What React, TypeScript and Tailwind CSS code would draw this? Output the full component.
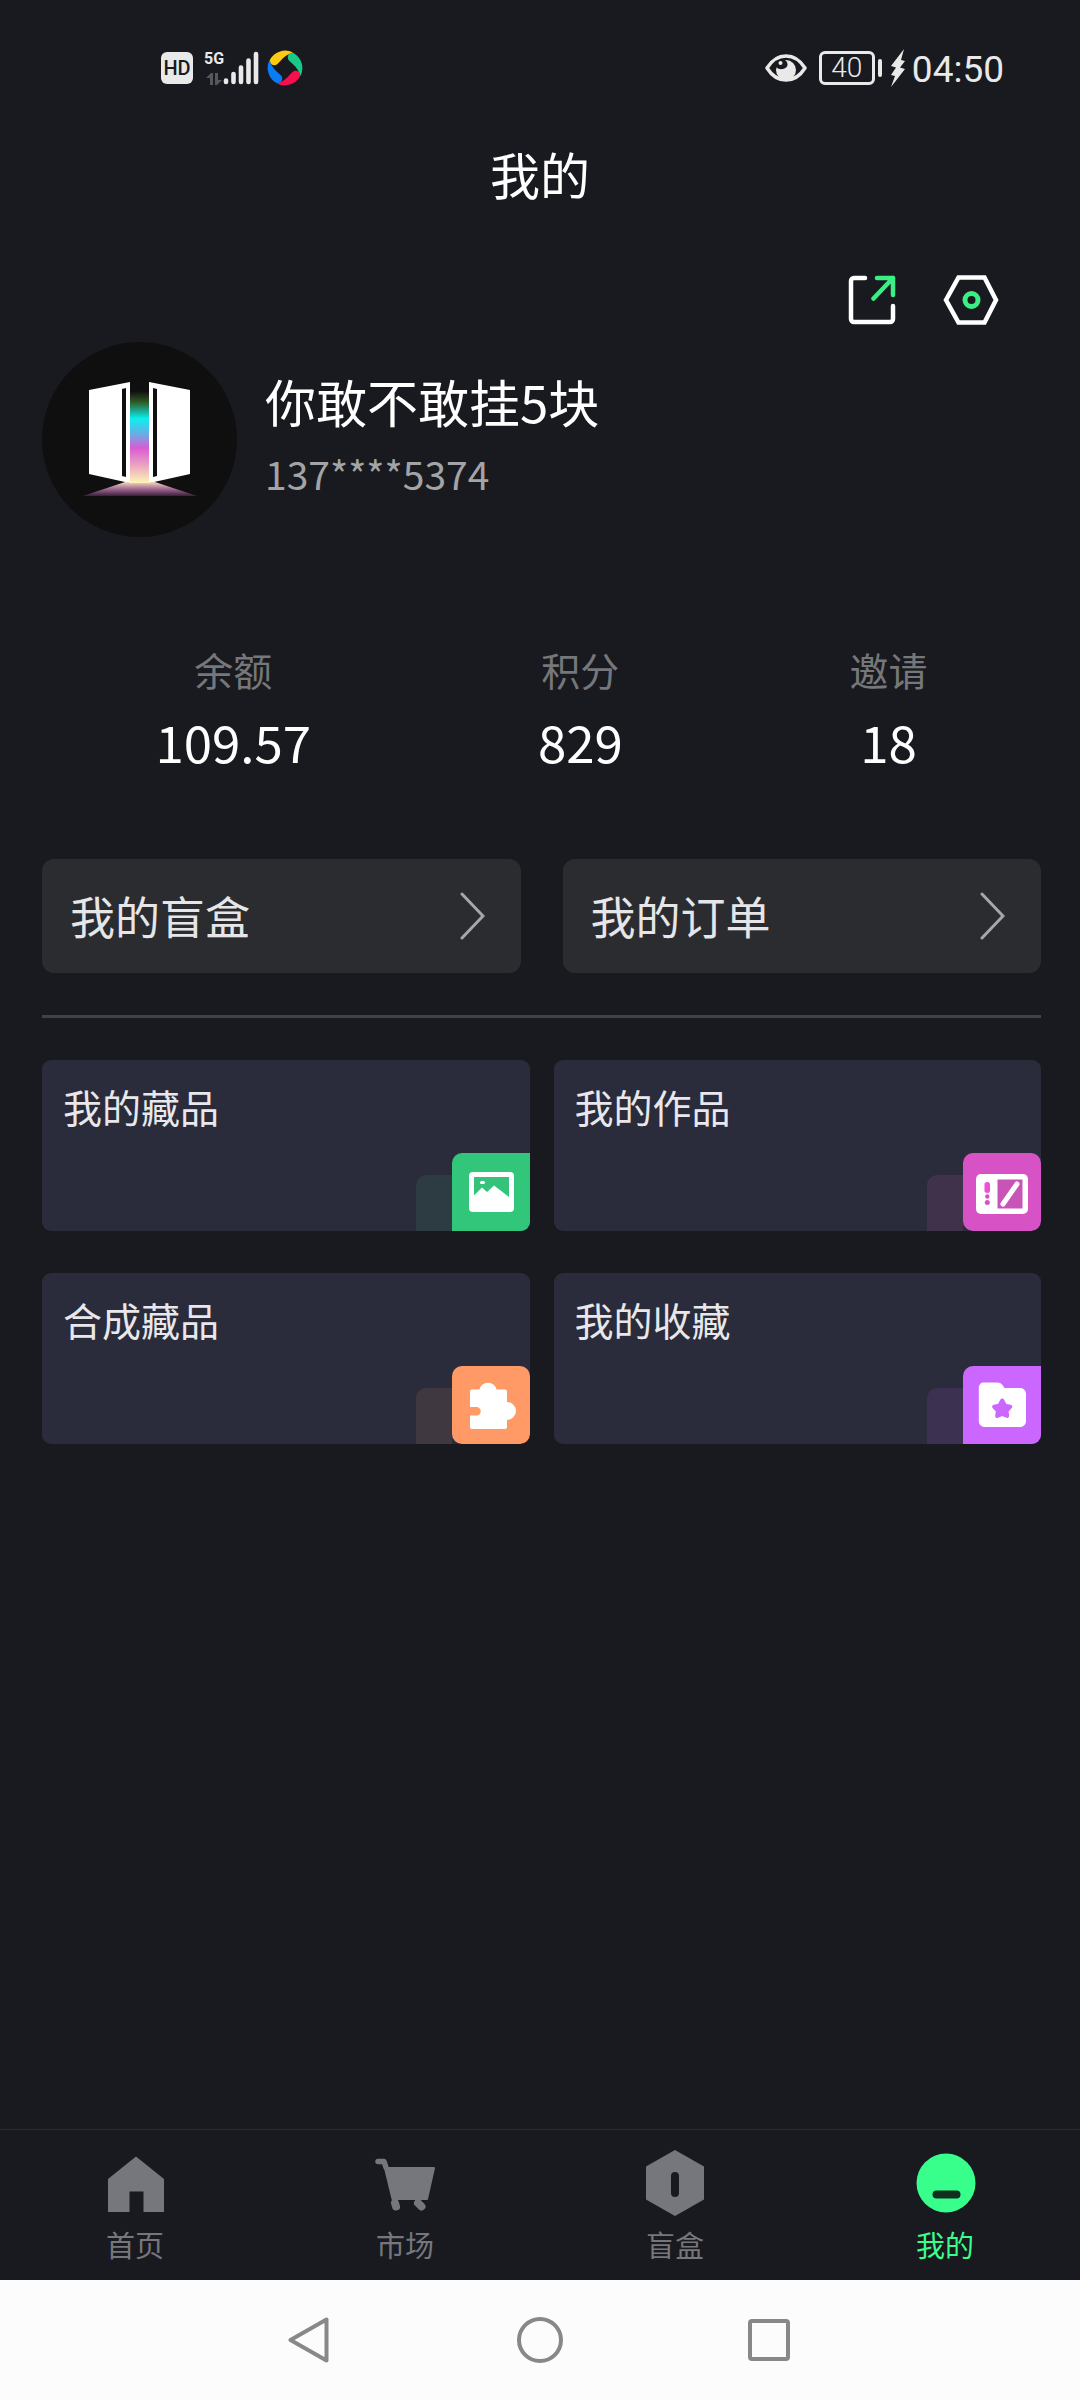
import React from 'react';

interface Feature {
  label: string;
  tile: string;
  ghost: string;
  icon: React.ReactNode;
}

const STATS = [
  { label: '余额', value: '109.57' },
  { label: '积分', value: '829' },
  { label: '邀请', value: '18' },
];

const SHORTCUTS = ['我的盲盒', '我的订单'];

const PictureIcon = () => (
  <svg viewBox="0 0 78 78" className="w-full h-full">
    <rect x="17" y="19" width="45" height="40" rx="4" fill="#fff" />
    <path d="M22 24h35v20L42 32.500l-7 6.500-5-4.500-8 8z" fill="#35c37b" />
    <rect x="28" y="28" width="5" height="3" rx="1.500" fill="#fff" />
  </svg>
);

const TabletIcon = () => (
  <svg viewBox="0 0 78 78" className="w-full h-full">
    <rect x="13" y="21" width="52" height="40" rx="5" fill="#fff" />
    <rect x="34.500" y="26.500" width="25" height="29" fill="#c954b8" />
    <path d="M40 51 54 31" stroke="#fff" strokeWidth="5" strokeLinecap="round" />
    <rect x="21.500" y="29" width="5.500" height="11" rx="2.700" fill="#f04fd8" />
    <circle cx="24.300" cy="43.500" r="2.200" fill="#d753c5" />
    <circle cx="24.300" cy="49.500" r="2.500" fill="#d753c5" />
  </svg>
);

const PuzzleIcon = () => (
  <svg viewBox="0 0 78 78" className="w-full h-full">
    <path
      d="M20 23.500h7.500a8.700 8.700 0 0 1 17 0H53a2 2 0 0 1 2 2V36a9 9 0 1 1 0 18v7a2 2 0 0 1-2 2H20a2 2 0 0 1-2-2V49.500h6.500a4 4 0 0 0 0-8.500H18V25.500a2 2 0 0 1 2-2z"
      fill="#fff"
    />
  </svg>
);

const FolderIcon = () => (
  <svg viewBox="0 0 78 78" className="w-full h-full">
    <path
      d="M21 16.500h13c3 0 4.500 1 6 3.200l1.500 2.300H57c3.500 0 6 2.500 6 6v27c0 3.500-2.500 6-6 6H22c-3.500 0-6.200-2.500-6.200-6V22c0-3.500 2-5.500 5.200-5.500z"
      fill="#fff"
    />
    <path
      d="m39.200 34.500 2.800 5.300 5.300.9-3.800 4.200.7 5-5-2-5 2 .7-5-3.800-4.200 5.300-.9z"
      fill="#cb66ff"
      stroke="#cb66ff"
      strokeWidth="4"
      strokeLinejoin="round"
    />
  </svg>
);

const FEATURES: Feature[] = [
  { label: '我的藏品', tile: 'bg-[#32c67a] rounded-tl-[10px]', ghost: 'bg-[#2c3c42]', icon: <PictureIcon /> },
  { label: '我的作品', tile: 'bg-[#d753c5] rounded-[10px]', ghost: 'bg-[#40324b]', icon: <TabletIcon /> },
  { label: '合成藏品', tile: 'bg-[#ff9966] rounded-[10px]', ghost: 'bg-[#403840]', icon: <PuzzleIcon /> },
  { label: '我的收藏', tile: 'bg-[#cb66ff] rounded-tl-[10px]', ghost: 'bg-[#3c3150]', icon: <FolderIcon /> },
];

const TABS = [
  {
    label: '首页',
    active: false,
    icon: <path d="M34 6.500 62 29v33H41.500V41.500h-14V62H6V29z" fill="#76777c" />,
  },
  {
    label: '市场',
    active: false,
    icon: (
      <g fill="#76777c" stroke="#76777c" strokeLinejoin="round" strokeLinecap="round">
        <path d="M6 11.500h6l2 6" fill="none" strokeWidth="5.500" />
        <path d="M13 18h49l-7 31H20.500z" strokeWidth="2" />
        <path d="m23 53 1 3.500M46 53l3.500 3.500" strokeWidth="8" />
      </g>
    ),
  },
  {
    label: '盲盒',
    active: false,
    icon: (
      <>
        <path d="M33 0 62 16.500v33L33 66 4 49.500v-33z" fill="#76777c" />
        <rect x="29" y="22" width="8" height="25" rx="4" fill="#191a1f" />
      </>
    ),
  },
  {
    label: '我的',
    active: true,
    icon: (
      <>
        <circle cx="34" cy="33" r="29.500" fill="#38fe8c" />
        <rect x="20.500" y="40.500" width="28" height="8" rx="4" fill="#12301f" />
      </>
    ),
  },
];

const BLADES = [
  { fill: '#fdc912', angle: 0 },
  { fill: '#19c98a', angle: 90 },
  { fill: '#f7104e', angle: 180 },
  { fill: '#0a7cf5', angle: 270 },
];

const StatusBar = () => (
  <div className="flex items-center justify-between h-[136px] pl-[161px] pr-[76px] text-[#e9e9ea] font-['Roboto',sans-serif]">
    <div className="flex items-center">
      <div className="flex items-center justify-center w-8 h-8 rounded-md bg-[#e9e9ea] text-[#191a1f] text-xl font-medium">
        HD
      </div>
      <div className="flex items-end h-[34px] ml-3">
        <div className="flex flex-col justify-between items-center w-[18px] h-full">
          <span className="text-base leading-4 font-bold">5G</span>
          <svg viewBox="0 0 16 12" className="w-4 h-3" fill="#56575c">
            <path d="M0 5 5 0h2v12H4V5zM9 0h3v7h4l-5 5H9z" />
          </svg>
        </div>
        <svg viewBox="0 0 36 34" className="w-9 h-[34px]" stroke="#e9e9ea" strokeWidth="4.600" strokeLinecap="round">
          <path d="M3 29.500v1.500M10.500 23v8M18 16.500V31M25.500 9.500V31M33 3v28" />
        </svg>
      </div>
      <svg viewBox="-18 -18 36 36" className="w-9 h-9 ml-2">
        {BLADES.map(blade => (
          <path
            key={blade.angle}
            d="M8-15.500A17.500 17.500 0 0 0-15-8.500C-16-3-10-1-7-4.500-2-9.500-1.500-12 8-15.500z"
            fill={blade.fill}
            transform={`rotate(${blade.angle})`}
          />
        ))}
      </svg>
    </div>
    <div className="flex items-center">
      <svg viewBox="0 0 42 28" className="w-[42px] h-7">
        <path d="M2 14C12-2 30-2 40 14 30 30 12 30 2 14z" fill="none" stroke="#e9e9ea" strokeWidth="3.500" strokeLinejoin="round" />
        <circle cx="21" cy="16" r="10" fill="#e9e9ea" />
        <path d="M18 5c6 2 6 9 0 10-3 .5-6-.5-7.500-2.500C12 8 14 6 18 5z" fill="#191a1f" />
        <circle cx="15.500" cy="9" r="2" fill="#e9e9ea" />
      </svg>
      <div className="flex items-center justify-center w-14 h-[34px] ml-3 rounded-md border-3 border-[#e9e9ea] text-[28px] leading-7 font-light">
        40
      </div>
      <div className="w-1 h-[18px] ml-[3px] rounded-sm bg-[#e9e9ea]" />
      <svg viewBox="0 0 16 38" className="w-4 h-[38px] ml-2" fill="#e9e9ea">
        <path d="M14 0 1 17l5 1.500L1 26l4 1-4 11L15 20l-5-1.500L15 12l-4-1z" />
      </svg>
      <time className="ml-[6px] pt-1 text-[37px] leading-[40px]">04:50</time>
    </div>
  </div>
);

const Avatar = () => (
  <svg viewBox="0 0 195 195" className="w-[195px] h-[195px] shrink-0">
    <defs>
      <linearGradient id="beam" x1="0" y1="0" x2="0" y2="1">
        <stop offset="0" stopColor="#0f0f0f" />
        <stop offset="0.120" stopColor="#2f5a25" />
        <stop offset="0.300" stopColor="#0cefee" />
        <stop offset="0.480" stopColor="#71a8e4" />
        <stop offset="0.620" stopColor="#da5bd3" />
        <stop offset="0.800" stopColor="#eaa0c2" />
        <stop offset="1" stopColor="#fdf5b5" />
      </linearGradient>
      <linearGradient id="floor" x1="0" y1="0" x2="0" y2="1">
        <stop offset="0" stopColor="#f5dcb4" />
        <stop offset="0.450" stopColor="#a8709a" />
        <stop offset="1" stopColor="#3c1f3a" />
      </linearGradient>
    </defs>
    <circle cx="97.500" cy="97.500" r="97.500" fill="#0f0f0f" />
    <path d="M83 140h30l42 14H41z" fill="url(#floor)" />
    <rect x="87" y="49" width="21" height="92" fill="url(#beam)" />
    <path d="m47 48 41-8v100h-5L47 132z" fill="#fff" />
    <path d="m148 48-41-8v100h5l36-8z" fill="#fff" />
    <path d="m80 47 4-1v89l-4-1zM115 47l-4-1v89l4-1z" fill="#0f0f0f" />
  </svg>
);

const App: React.FC = () => {
  return (
    <div className="min-h-screen flex flex-col bg-[#191a1f] text-white font-['Noto_Sans_CJK_SC',sans-serif]">
      <StatusBar />

      <h1 className="text-center text-[50px] leading-[74px]">我的</h1>

      <main className="flex-1 pl-[42px] pr-[39px]">
        {/* Share / settings */}
        <div className="flex justify-end items-center gap-[47px] mt-16 pr-[42px]">
          <button type="button" aria-label="分享">
            <svg viewBox="0 0 48 52" className="w-12 h-[52px]" fill="none" strokeWidth="4.500" strokeLinecap="round" strokeLinejoin="round">
              <path d="M17 4H6a3 3 0 0 0-3 3v38a3 3 0 0 0 3 3h36a3 3 0 0 0 3-3V32" stroke="#fff" />
              <path d="M29 4h16v17M45 4 25.500 24.500" stroke="#3af084" />
            </svg>
          </button>
          <button type="button" aria-label="设置">
            <svg viewBox="0 0 56 52" className="w-14 h-[52px]" fill="none" strokeWidth="4.500">
              <path d="M15.500 3.500h26L53 26 41.500 48.500h-26L3 26z" stroke="#fff" />
              <circle cx="28.500" cy="26" r="6.500" stroke="#3af084" strokeWidth="5" />
            </svg>
          </button>
        </div>

        {/* Profile */}
        <section className="flex items-start gap-7 mt-4">
          <Avatar />
          <div className="pt-[23px]">
            <h2 className="text-[51px] leading-[72px]">你敢不敢挂5块</h2>
            <p className="mt-3 text-[39px] leading-[48px] text-[#a3a4a6]">137****5374</p>
          </div>
        </section>

        {/* Stats */}
        <section className="flex justify-around mt-[108px]">
          {STATS.map(stat => (
            <div key={stat.label} className="text-center">
              <p className="text-[39px] leading-[48px] text-[#76777a]">{stat.label}</p>
              <p className="mt-[18px] text-[51px] leading-[60px]">{stat.value}</p>
            </div>
          ))}
        </section>

        {/* Shortcuts */}
        <div className="grid grid-cols-2 gap-[42px] mt-[88px]">
          {SHORTCUTS.map(label => (
            <a
              key={label}
              href="#"
              className="flex items-center justify-between h-[114px] pl-7 pr-9 rounded-xl bg-[#2b2c30] text-[45px] leading-[60px] text-[#e6e6e8]"
            >
              {label}
              <svg viewBox="0 0 26 48" className="w-[26px] h-12" fill="none" stroke="#a6a7a9" strokeWidth="3" strokeLinecap="round">
                <path d="m3 2 21 22L3 46" />
              </svg>
            </a>
          ))}
        </div>

        <hr className="my-[42px] border-t-3 border-[#404144]" />

        {/* Feature cards */}
        <div className="grid grid-cols-2 gap-x-6 gap-y-[42px]">
          {FEATURES.map(item => (
            <a
              key={item.label}
              href="#"
              className="flex flex-col justify-between h-[171px] pt-[22px] rounded-[9px] overflow-hidden bg-[#2b2c3b]"
            >
              <span className="pl-[21px] text-[39px] leading-[48px] text-[#e8e8ec]">{item.label}</span>
              <span className="flex justify-end items-end">
                <span className={`w-9 h-14 rounded-tl-[10px] ${item.ghost}`} />
                <span className={`w-[78px] h-[78px] ${item.tile}`}>{item.icon}</span>
              </span>
            </a>
          ))}
        </div>
      </main>

      {/* Tab bar */}
      <nav className="grid grid-cols-4 border-t border-[#2c2d31]">
        {TABS.map(tab => (
          <a key={tab.label} href="#" className="flex flex-col items-center pt-5 pb-[18px]">
            <svg viewBox="0 0 66 66" className="w-[66px] h-[66px]">
              {tab.icon}
            </svg>
            <span className={`mt-[10px] text-[29px] leading-9 ${tab.active ? 'text-[#38fe8c]' : 'text-[#76777c]'}`}>
              {tab.label}
            </span>
          </a>
        ))}
      </nav>

      {/* System navigation */}
      <div className="flex justify-center items-center gap-[183px] h-[120px] bg-[#fcfcfc]">
        <button type="button" aria-label="返回">
          <svg viewBox="0 0 46 46" className="w-[46px] h-[46px]" fill="none" stroke="#888" strokeWidth="4" strokeLinejoin="round">
            <path d="M38.500 2.500v41L2.500 23z" />
          </svg>
        </button>
        <button type="button" aria-label="主屏幕" className="w-[46px] h-[46px] rounded-full border-4 border-[#888]" />
        <button type="button" aria-label="最近任务" className="flex justify-center items-center w-[46px] h-[46px]">
          <span className="w-[42px] h-[42px] rounded-[4px] border-4 border-[#888]" />
        </button>
      </div>
    </div>
  );
};

export default App;
